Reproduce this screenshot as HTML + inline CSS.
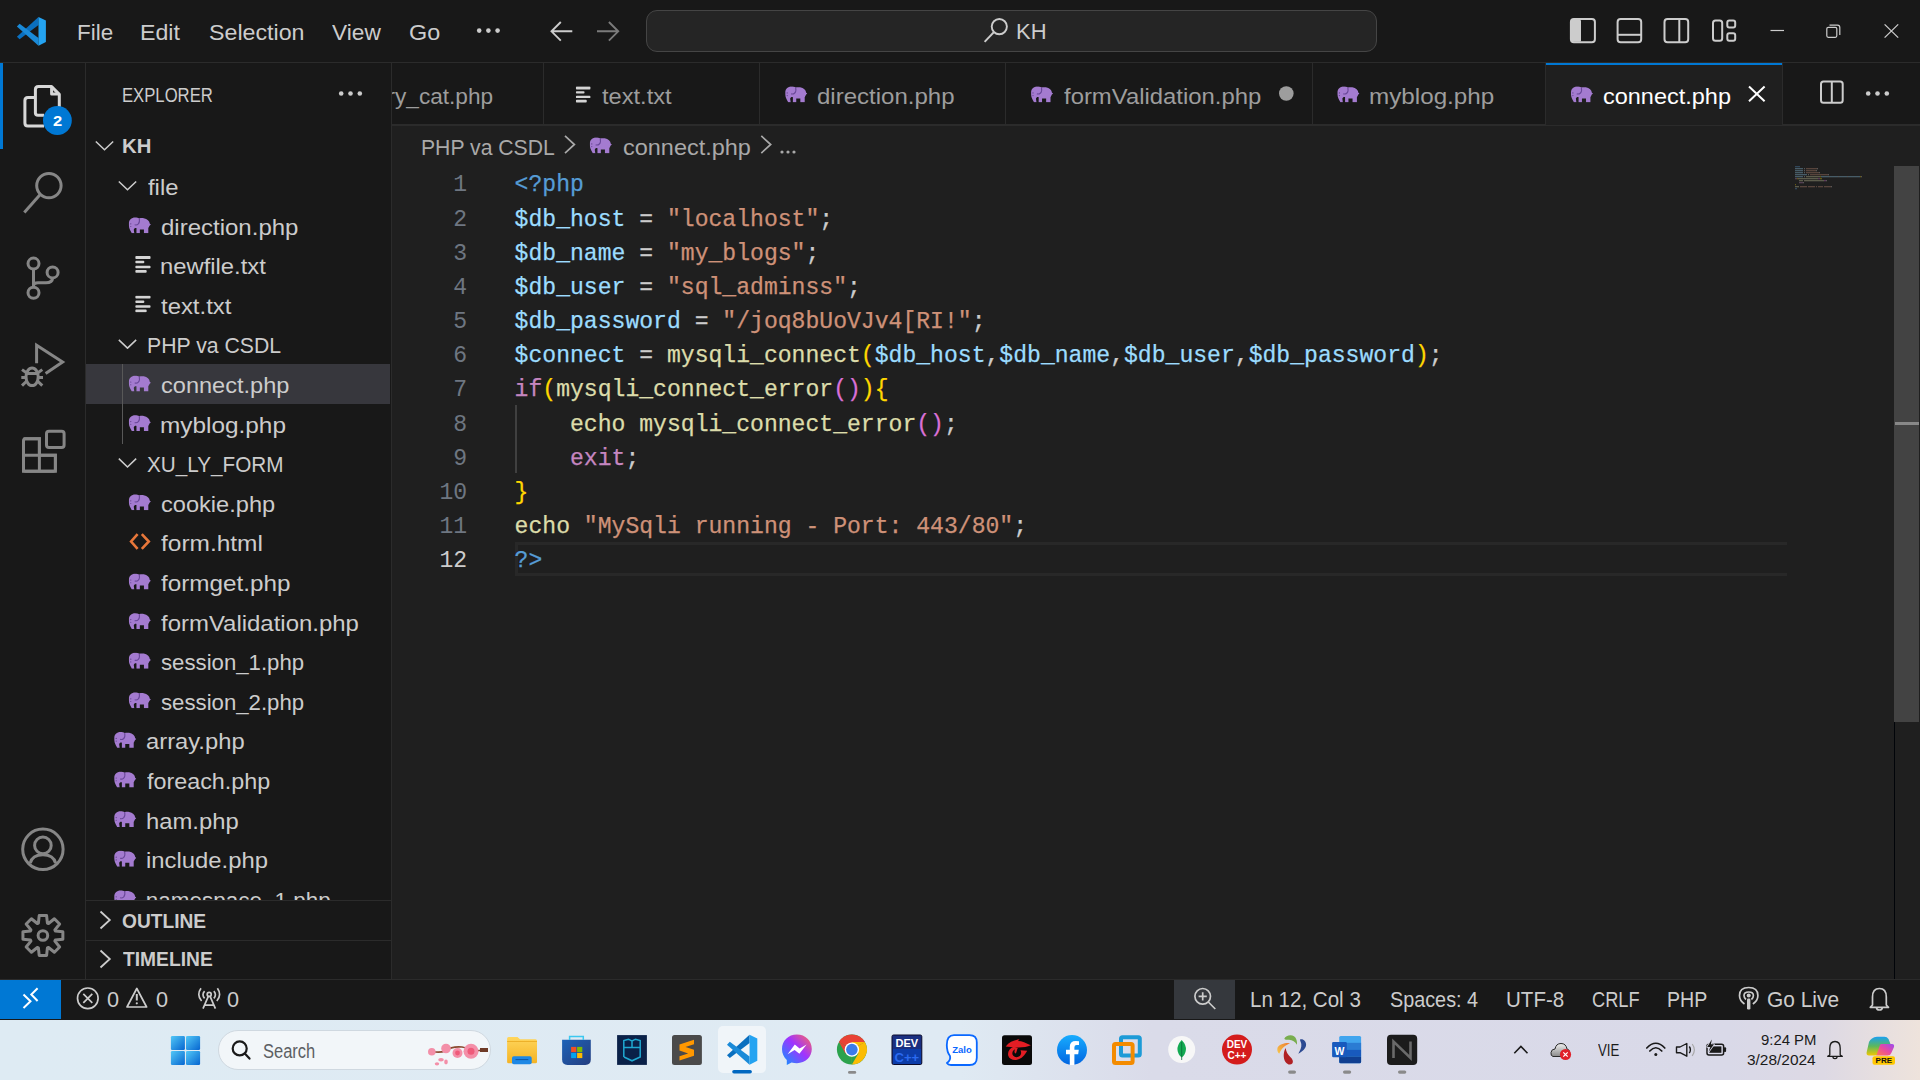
<!DOCTYPE html>
<html><head><meta charset="utf-8"><style>
html,body{margin:0;padding:0;width:1920px;height:1080px;overflow:hidden;background:#1f1f1f;}
body{position:relative;font-family:"Liberation Sans",sans-serif;}
.b{position:absolute;}
.t{position:absolute;white-space:pre;line-height:1;transform-origin:0 0;font-family:"Liberation Sans",sans-serif;}
#ic{position:absolute;left:0;top:0;}
#sbclip{position:absolute;left:0;top:0;width:1920px;height:1080px;clip-path:inset(0 0 180px 0);}

.c{position:absolute;left:514.6px;-webkit-text-stroke:0.25px currentColor;font-family:"Liberation Mono",monospace;font-size:23.088px;line-height:23.088px;white-space:pre;}
.ln{position:absolute;left:400px;width:67.19999999999999px;text-align:right;font-family:"Liberation Mono",monospace;font-size:23.088px;line-height:23.088px;white-space:pre;}
</style></head><body>
<!-- title bar -->
<div class="b" style="left:0;top:0;width:1920px;height:62px;background:#181818"></div>
<div class="b" style="left:0;top:62px;width:1920px;height:1px;background:#2b2b2b"></div>
<!-- command center -->
<div class="b" style="left:646px;top:10px;width:729px;height:40px;background:#252525;border:1px solid #454545;border-radius:11px"></div>
<!-- activity bar -->
<div class="b" style="left:0;top:63px;width:85px;height:917px;background:#181818"></div>
<div class="b" style="left:85px;top:63px;width:1px;height:917px;background:#2b2b2b"></div>
<div class="b" style="left:0;top:63px;width:3px;height:86px;background:#0078d4"></div>
<!-- sidebar -->
<div class="b" style="left:86px;top:63px;width:305px;height:917px;background:#181818"></div>
<div class="b" style="left:391px;top:63px;width:1px;height:917px;background:#2b2b2b"></div>
<div class="b" style="left:86px;top:364px;width:304px;height:40px;background:#37373d"></div>
<div class="b" style="left:122px;top:364px;width:1px;height:80px;background:#585858"></div>
<div class="b" style="left:86px;top:900px;width:305px;height:1px;background:#2b2b2b"></div>
<div class="b" style="left:86px;top:940px;width:305px;height:1px;background:#2b2b2b"></div>
<!-- tabs -->
<div class="b" style="left:392px;top:63px;width:1528px;height:61px;background:#181818"></div>
<div class="b" style="left:392px;top:124px;width:1528px;height:2px;background:#2b2b2b"></div>
<div class="b" style="left:543px;top:63px;width:1px;height:61px;background:#2b2b2b"></div>
<div class="b" style="left:759px;top:63px;width:1px;height:61px;background:#2b2b2b"></div>
<div class="b" style="left:1005px;top:63px;width:1px;height:61px;background:#2b2b2b"></div>
<div class="b" style="left:1312px;top:63px;width:1px;height:61px;background:#2b2b2b"></div>
<div class="b" style="left:1545px;top:63px;width:1px;height:61px;background:#2b2b2b"></div>
<div class="b" style="left:1782px;top:63px;width:1px;height:61px;background:#2b2b2b"></div>
<div class="b" style="left:1546px;top:63px;width:236px;height:62px;background:#1f1f1f"></div>
<div class="b" style="left:1546px;top:63px;width:236px;height:2px;background:#0078d4"></div>
<!-- editor -->
<div class="b" style="left:392px;top:126px;width:1528px;height:854px;background:#1f1f1f"></div>
<!-- current line border -->
<div class="b" style="left:515px;top:542px;width:1269px;height:28px;border:3px solid #282828;border-right:none"></div>
<!-- indent guide -->
<div class="b" style="left:515px;top:405px;width:2px;height:68px;background:#404040"></div>
<!-- scrollbar -->
<div class="b" style="left:1894px;top:722px;width:1px;height:257px;background:#010409"></div>
<div class="b" style="left:1894px;top:166px;width:25px;height:556px;background:#434343"></div>
<div class="b" style="left:1895px;top:422px;width:24px;height:3px;background:#888888"></div>
<!-- status bar -->
<div class="b" style="left:0;top:979px;width:1920px;height:1px;background:#2b2b2b"></div>
<div class="b" style="left:0;top:980px;width:1920px;height:40px;background:#181818"></div>
<div class="b" style="left:0;top:980px;width:61px;height:39px;background:#0078d4"></div>
<div class="b" style="left:1174px;top:980px;width:61px;height:39px;background:#35383d"></div>
<!-- taskbar -->
<div class="b" style="left:0;top:1020px;width:1920px;height:60px;background:linear-gradient(90deg,#deebf3 0%,#dfeaf3 50%,#dadbe9 60%,#d9d9e8 90%,#ddd9e4 95%,#eee3dc 100%)"></div>
<div class="b" style="left:218px;top:1030px;width:271px;height:38px;background:#f2f6f9;border:1px solid #cfd8e0;border-radius:20px"></div>
<div class="b" style="left:718px;top:1026px;width:48px;height:47px;background:#f0f5f9;border-radius:5px"></div>

<svg id="ic" width="1920" height="1080" viewBox="0 0 1920 1080">
<defs>
<symbol id="ele" viewBox="0 0 22.7 16.2">
<path fill="#a47bd0" d="M0.5 6.5C0.5 2.6 3 0.3 6.8 0.3C8.5 0.3 9.8 0.7 10.9 1.3C12 0.9 13.8 0.8 15.4 1C19 1.4 21.2 3.8 21.5 6.6L22.6 7.4L21.4 8.4L20 11L20 16.2L15.6 16.2L15.6 12.3L11.5 12.3L11.5 16.2L8.1 16.2L8.1 11C7 10.6 5.7 11 5.4 12.6L5.9 16.2L3.4 16.2C2.7 14.6 1.4 12.6 0.8 10.6C0.5 9.3 0.5 7.8 0.5 6.5Z"/>
<path fill="none" stroke="#6a4899" stroke-width="1.1" d="M10.9 1.3C11.3 3.2 11.2 5.6 10 6.8C8.9 7.9 7.6 8 6.3 7.7"/>
<circle cx="2.4" cy="6.7" r="0.6" fill="#5d3f86"/><circle cx="2.4" cy="9.4" r="0.55" fill="#5d3f86"/>
</symbol>
<symbol id="txt" viewBox="0 0 16 17">
<g fill="#d4d4d4"><rect x="0" y="0" width="15.7" height="3" rx="1"/><rect x="0" y="4.9" width="9.3" height="2.5" rx="1"/><rect x="0" y="9.8" width="15.7" height="2.5" rx="1"/><rect x="0" y="14.1" width="11.7" height="2.8" rx="1"/></g>
</symbol>
<symbol id="chev" viewBox="0 0 20 11">
<path d="M1 1.2L10 9.8L19 1.2" fill="none" stroke="#cccccc" stroke-width="1.6"/>
</symbol>
<clipPath id="sbc"><rect x="86" y="125" width="305" height="775"/></clipPath>
</defs>

<!-- ===== TITLE BAR ===== -->
<g>
 <path d="M16.9 36.7L38.5 17V25L19.6 39.3Z" fill="#0a6fbf"/>
 <path d="M16.9 26.5L19.6 23.8L38.5 37.9V45.7Z" fill="#1a8ad8"/>
 <path d="M38.5 17L45.9 20.6V42L38.5 45.7Z" fill="#24a3f1"/>
</g>
<g fill="#cccccc"><circle cx="479.2" cy="30.6" r="2.3"/><circle cx="488.4" cy="30.6" r="2.3"/><circle cx="497.6" cy="30.6" r="2.3"/></g>
<path d="M551.5 31.3H572.3M560.8 22L551.5 31.3L560.8 40.6" fill="none" stroke="#cccccc" stroke-width="1.9"/>
<path d="M597 31.3H618.2M608.9 22L618.2 31.3L608.9 40.6" fill="none" stroke="#7b7b7b" stroke-width="1.9"/>
<g fill="none" stroke="#cccccc" stroke-width="1.9"><circle cx="999.3" cy="26.6" r="7.6"/><path d="M994 32L984.6 41.8"/></g>
<!-- layout icons -->
<g fill="none" stroke="#cccccc" stroke-width="2">
 <rect x="1570.9" y="18.9" width="24" height="23.3" rx="3"/>
 <rect x="1617.6" y="18.9" width="23.6" height="23.3" rx="3"/><path d="M1617.6 34.8H1641.2"/>
 <rect x="1664.5" y="18.9" width="23.7" height="23.3" rx="3"/><path d="M1679.3 18.9V42.2"/>
 <rect x="1713" y="20.4" width="9.2" height="20.3" rx="2.5"/>
 <rect x="1727.3" y="20.4" width="7.9" height="7.2" rx="2"/><rect x="1727.3" y="33.3" width="7.9" height="7.4" rx="2"/>
</g>
<rect x="1571" y="19.5" width="10" height="22.3" rx="1.5" fill="#cccccc"/>
<path d="M1770.5 30.5H1784" stroke="#cccccc" stroke-width="1.2"/>
<g fill="none" stroke="#cccccc" stroke-width="1.2"><rect x="1826.8" y="27.3" width="10" height="10" rx="1.5"/><path d="M1829.5 25.2H1837.5Q1839.8 25.2 1839.8 27.5V35"/></g>
<path d="M1884.6 24.4L1898.2 37.6M1898.2 24.4L1884.6 37.6" stroke="#cccccc" stroke-width="1.3"/>

<!-- ===== ACTIVITY BAR ===== -->
<g fill="none" stroke="#d7d7d7" stroke-width="3" stroke-linejoin="round">
 <path d="M35.4 113V89.6Q35.4 86.6 38.4 86.6H51.6L59.3 94.4V108"/>
 <path d="M51.6 86.6V94.1H59.3"/>
 <path d="M35.4 113Q35.4 115.2 38 115.2H44"/>
 <path d="M35.4 97.4H27.9Q24.9 97.4 24.9 100.4V123Q24.9 126 27.9 126H44"/>
</g>
<circle cx="57.4" cy="120.5" r="14.4" fill="#0078d4"/>
<g fill="none" stroke="#868686" stroke-width="3">
 <circle cx="48.9" cy="185.6" r="12.2"/><path d="M40.2 194.5L24.3 212.6"/>
 <circle cx="33.5" cy="263.6" r="5.5"/><circle cx="52.6" cy="272.4" r="5.5"/><circle cx="33.5" cy="292.8" r="5.5"/>
 <path d="M33.5 269.1V287.3M52.6 277.9Q52.4 282.8 46 282.8H38Q33.5 282.8 33.5 286"/>
 <path d="M36.6 363.3V345.3L62.6 362L45.6 373.6"/>
 <ellipse cx="32.1" cy="376.8" rx="6.1" ry="8.8"/><path d="M26 373.6H38.2M22 369.6L26.8 373M42.3 369.6L37.5 373M21.3 377.6H26M38.2 377.6H43M22 385.6L26.8 381M42.3 385.6L37.5 381"/>
 <path d="M23.5 455.3H55.4V471.3H23.5ZM23.5 438.8H39.4V471.3"/>
 <rect x="46.5" y="431.2" width="17.6" height="16.4" rx="2.5"/>
 <path d="M23.5 440.8Q23.5 438.8 25.5 438.8H39.4V455.3H55.4V469.3Q55.4 471.3 53.4 471.3H25.5Q23.5 471.3 23.5 469.3Z"/>
</g>
<g fill="none" stroke="#868686" stroke-width="3">
 <circle cx="42.9" cy="849.3" r="20.2"/><circle cx="42.9" cy="845.4" r="8.3"/>
 <path d="M30.2 863.2C31.6 857.6 36.2 854.8 42.9 854.8C49.6 854.8 54.2 857.6 55.6 863.2"/>
</g>
<path fill="none" stroke="#868686" stroke-width="3" stroke-linejoin="round" d="M38.39 923.10 L39.20 915.54 L46.60 915.54 L47.41 923.10 L48.48 923.54 L54.40 918.77 L59.63 924.00 L54.86 929.92 L55.30 930.99 L62.86 931.80 L62.86 939.20 L55.30 940.01 L54.86 941.08 L59.63 947.00 L54.40 952.23 L48.48 947.46 L47.41 947.90 L46.60 955.46 L39.20 955.46 L38.39 947.90 L37.32 947.46 L31.40 952.23 L26.17 947.00 L30.94 941.08 L30.50 940.01 L22.94 939.20 L22.94 931.80 L30.50 930.99 L30.94 929.92 L26.17 924.00 L31.40 918.77 L37.32 923.54Z"/>
<circle cx="42.9" cy="935.5" r="4.8" fill="none" stroke="#868686" stroke-width="3"/>

<!-- ===== TABS ===== -->
<use href="#ele" x="784.8" y="86.2" width="22.6" height="16.2"/>
<use href="#ele" x="1030.6" y="86.2" width="22.6" height="16.2"/>
<use href="#ele" x="1337" y="86.2" width="22.6" height="16.2"/>
<use href="#ele" x="1570.5" y="86.2" width="22.6" height="16.2"/>
<use href="#txt" x="575.8" y="86.2" width="15" height="16.7"/>
<circle cx="1286.3" cy="93.5" r="7.3" fill="#9d9d9d"/>
<path d="M1749 86.6L1764.6 101.3M1764.6 86.6L1749 101.3" stroke="#ffffff" stroke-width="2"/>
<g fill="none" stroke="#cccccc" stroke-width="2"><rect x="1821" y="81.6" width="21.7" height="21.2" rx="2.5"/><path d="M1831.8 81.6V102.8"/></g>
<g fill="#cccccc"><circle cx="1868.2" cy="93.5" r="2.3"/><circle cx="1877.5" cy="93.5" r="2.3"/><circle cx="1886.8" cy="93.5" r="2.3"/></g>

<!-- ===== BREADCRUMBS ===== -->
<path d="M565 135.9L574.4 144.5L565 153.1M761.3 135.9L770.7 144.5L761.3 153.1" fill="none" stroke="#a9a9a9" stroke-width="1.7"/>
<use href="#ele" x="589.4" y="137.2" width="22.6" height="16.2"/>
<g fill="#a9a9a9"><circle cx="782" cy="152" r="1.6"/><circle cx="788" cy="152" r="1.6"/><circle cx="794" cy="152" r="1.6"/></g>

<!-- ===== SIDEBAR ===== -->
<g fill="#cccccc"><circle cx="341.2" cy="93.5" r="2.3"/><circle cx="350.5" cy="93.5" r="2.3"/><circle cx="359.8" cy="93.5" r="2.3"/></g>
<use href="#chev" x="94.8" y="140.3" width="19.4" height="10.6"/>
<use href="#chev" x="117.8" y="180.3" width="19.4" height="10.6"/>
<use href="#chev" x="117.8" y="338.7" width="19.4" height="10.6"/>
<use href="#chev" x="117.8" y="457.5" width="19.4" height="10.6"/>
<use href="#ele" x="128.4" y="217.1" width="22.6" height="16.2"/>
<use href="#txt" x="135.2" y="255.9" width="15.7" height="17"/>
<use href="#txt" x="135.2" y="295.5" width="15.7" height="17"/>
<use href="#ele" x="128.4" y="375.3" width="22.6" height="16.2"/>
<use href="#ele" x="128.4" y="414.9" width="22.6" height="16.2"/>
<use href="#ele" x="128.4" y="494.1" width="22.6" height="16.2"/>
<path d="M137.6 534.1L131.1 541.5L137.6 548.9M141.8 534.1L148.8 541.5L141.8 548.9" fill="none" stroke="#e8773a" stroke-width="2.6"/>
<use href="#ele" x="128.4" y="573.3" width="22.6" height="16.2"/>
<use href="#ele" x="128.4" y="612.9" width="22.6" height="16.2"/>
<use href="#ele" x="128.4" y="652.5" width="22.6" height="16.2"/>
<use href="#ele" x="128.4" y="692.1" width="22.6" height="16.2"/>
<use href="#ele" x="113.8" y="731.7" width="22.6" height="16.2"/>
<use href="#ele" x="113.8" y="771.3" width="22.6" height="16.2"/>
<use href="#ele" x="113.8" y="810.9" width="22.6" height="16.2"/>
<use href="#ele" x="113.8" y="850.5" width="22.6" height="16.2"/>
<g clip-path="url(#sbc)"><use href="#ele" x="113.8" y="890.1" width="22.6" height="16.2"/></g>
<path d="M100.5 911.5L109.8 920L100.5 928.5M100.5 950.5L109.8 959L100.5 967.5" fill="none" stroke="#cccccc" stroke-width="1.8"/>

<!-- ===== STATUS BAR ===== -->
<path d="M23.5 994.5L30.5 1001.3L23.5 1008M37.6 988.3L31.3 994.5L37.6 1001" fill="none" stroke="#ffffff" stroke-width="2"/>
<g fill="none" stroke="#cccccc" stroke-width="1.7">
 <circle cx="87.8" cy="998.3" r="10.3"/><path d="M83.3 993.8L92.3 1002.8M92.3 993.8L83.3 1002.8"/>
 <path d="M136.8 988.5L127 1007H146.6Z" stroke-linejoin="round"/>
 <path d="M201 988.3Q198.8 991.3 198.8 994.6Q198.8 998 201.6 1001M217.4 988.3Q219.6 991.3 219.6 994.6Q219.6 998 216.8 1001M204.6 991.2Q203 992.8 203 994.8Q203 996.8 204.6 998.4M213.8 991.2Q215.4 992.8 215.4 994.8Q215.4 996.8 213.8 998.4"/>
 <circle cx="209.2" cy="994.4" r="2"/><path d="M208.3 996.4L203 1008.6M210.1 996.4L215.4 1008.6M204.6 1005.2H213.8"/>
</g>
<path d="M136.8 994V1000.5" stroke="#cccccc" stroke-width="2"/><circle cx="136.8" cy="1003.3" r="1.1" fill="#cccccc"/>
<g fill="none" stroke="#cccccc" stroke-width="1.7">
 <circle cx="1202.7" cy="996.3" r="7.8"/><path d="M1208.3 1002L1215.3 1009M1202.7 992.2V1000.4M1198.6 996.3H1206.8"/>
 <path d="M1744.5 1004Q1739.5 1000.5 1739.5 995.5Q1739.5 987.5 1748.7 987.5Q1757.9 987.5 1757.9 995.5Q1757.9 1000.5 1752.9 1004M1746 999.5Q1744 997.8 1744 995.5Q1744 992 1748.7 992Q1753.4 992 1753.4 995.5Q1753.4 997.8 1751.4 999.5"/>
</g>
<circle cx="1748.7" cy="995.5" r="2" fill="#cccccc"/><rect x="1747" y="998.5" width="3.4" height="11" rx="1.2" fill="#cccccc"/>
<path d="M1872.5 1005V997Q1872.5 988.5 1879.4 988.5Q1886.3 988.5 1886.3 997V1005L1888.5 1007.3H1870.3Z M1876.5 1007.5Q1876.5 1010 1879.4 1010Q1882.3 1010 1882.3 1007.5" fill="none" stroke="#cccccc" stroke-width="1.7" stroke-linejoin="round"/>
<defs>
<linearGradient id="wing" x1="0" y1="0" x2="1" y2="1"><stop offset="0" stop-color="#52c8f7"/><stop offset="1" stop-color="#0665d0"/></linearGradient>
<linearGradient id="fold" x1="0" y1="0" x2="0" y2="1"><stop offset="0" stop-color="#ffd65c"/><stop offset="1" stop-color="#f4b324"/></linearGradient>
<linearGradient id="store" x1="0" y1="0" x2="1" y2="1"><stop offset="0" stop-color="#1e63b8"/><stop offset="1" stop-color="#243e80"/></linearGradient>
<linearGradient id="msg" x1="0" y1="1" x2="1" y2="0"><stop offset="0" stop-color="#0998ff"/><stop offset="0.55" stop-color="#a033ff"/><stop offset="1" stop-color="#ff6b5c"/></linearGradient>
<linearGradient id="fb" x1="0" y1="0" x2="0" y2="1"><stop offset="0" stop-color="#18acfe"/><stop offset="1" stop-color="#0165e1"/></linearGradient>
<linearGradient id="cop1" x1="0" y1="0" x2="0" y2="1"><stop offset="0" stop-color="#1aa0f0"/><stop offset="0.5" stop-color="#5cb85c"/><stop offset="1" stop-color="#f0c800"/></linearGradient>
<linearGradient id="cop2" x1="0" y1="1" x2="1" y2="0"><stop offset="0" stop-color="#ff7a50"/><stop offset="0.5" stop-color="#e84aa0"/><stop offset="1" stop-color="#9a4cf0"/></linearGradient>
<linearGradient id="cloud" x1="0" y1="0" x2="0" y2="1"><stop offset="0" stop-color="#f0f0f0"/><stop offset="1" stop-color="#8a8a8a"/></linearGradient>
</defs>
<!-- windows -->
<g fill="url(#wing)"><rect x="170.9" y="1035.9" width="14" height="14.1" rx="1.3"/><rect x="186" y="1035.9" width="14.1" height="14.1" rx="1.3"/><rect x="170.9" y="1051" width="14" height="14.1" rx="1.3"/><rect x="186" y="1051" width="14.1" height="14.1" rx="1.3"/></g>
<!-- search -->
<g fill="none" stroke="#1a1a1a" stroke-width="2.2"><circle cx="239.7" cy="1048.4" r="7"/><path d="M244.8 1053.6L249.5 1058.6" stroke-linecap="round"/></g>
<!-- cherry blossom -->
<path d="M432 1051.5Q440 1053 445 1051Q452 1046 462 1047Q468 1048 471 1051L488 1050" fill="none" stroke="#8a4a30" stroke-width="1.6"/>
<rect x="480" y="1048" width="8" height="4" fill="#6e3a26"/>
<g fill="#f38fa8"><circle cx="471" cy="1051.2" r="7.5"/><circle cx="457.5" cy="1053" r="5"/><circle cx="446" cy="1048.5" r="4.8"/><circle cx="431.8" cy="1051.8" r="3.8"/><ellipse cx="437" cy="1063.8" rx="2.2" ry="1.6"/><ellipse cx="441" cy="1059.8" rx="2.8" ry="1.8"/><ellipse cx="446" cy="1062" rx="1.8" ry="2.4"/></g>
<g fill="#ef5a7a"><circle cx="471" cy="1051.2" r="3.5"/><circle cx="457.5" cy="1053" r="2.4"/></g>
<!-- file explorer -->
<path d="M507.1 1038.5Q507.1 1037 508.6 1037H517.5L520 1039.2H535.5Q537 1039.2 537 1040.7V1062Q537 1063.3 535.5 1063.3H508.6Q507.1 1063.3 507.1 1062Z" fill="url(#fold)"/>
<path d="M507.1 1041.5H537" stroke="#e8a820" stroke-width="0.8"/>
<rect x="512" y="1056.2" width="19.7" height="8" rx="1.8" fill="#1e88e5"/><path d="M515.5 1059.6H528.3" stroke="#0d4f9a" stroke-width="0.9"/>
<!-- store -->
<path d="M562.1 1039.8H590.8V1059.5Q590.8 1064.9 585.4 1064.9H567.5Q562.1 1064.9 562.1 1059.5Z" fill="url(#store)"/>
<path d="M569.6 1040V1036.6H583.3V1040" fill="none" stroke="#3cc8f0" stroke-width="1.5"/>
<rect x="571.1" y="1046.9" width="5.2" height="5.2" fill="#f25022"/><rect x="577.1" y="1046.9" width="5.2" height="5.2" fill="#7fba00"/><rect x="571.1" y="1052.9" width="5.2" height="5.2" fill="#00a4ef"/><rect x="577.1" y="1052.9" width="5.2" height="5.2" fill="#ffb900"/>
<!-- packet tracer-like -->
<rect x="617.1" y="1035.1" width="29.8" height="29.8" fill="#0a2148"/>
<path d="M623.8 1057V1040.5L628.5 1039.2L632 1041V1047.5H624M632 1041L635.5 1039.2L640.2 1040.5V1057L632 1060.8L624 1057M632 1047.5H640" fill="none" stroke="#1fa8d0" stroke-width="1.5"/>
<!-- sublime -->
<rect x="672" y="1035.1" width="29.9" height="29.8" rx="2.5" fill="#4a4a4a"/>
<path d="M694 1039.8L679.5 1044.5V1050.5L694 1055.5V1050.8L683.8 1047.5L694 1044.2Z M679.5 1060.5L694 1055.8V1049.8L679.5 1045V1049.6L689.7 1052.9L679.5 1056.2Z" fill="#ff9800"/>
<!-- vscode taskbar -->
<g transform="translate(727 1034.7) scale(1.045) translate(-16.9 -17)">
 <path d="M16.9 36.7L38.5 17V25L19.6 39.3Z" fill="#0a6fbf"/>
 <path d="M16.9 26.5L19.6 23.8L38.5 37.9V45.7Z" fill="#1a8ad8"/>
 <path d="M38.5 17L45.9 20.6V42L38.5 45.7Z" fill="#24a3f1"/>
</g>
<rect x="732.2" y="1070" width="19.7" height="3.6" rx="1.8" fill="#0067c0"/>
<!-- messenger -->
<path d="M796.9 1034.5C788.3 1034.5 782 1040.8 782 1049.1C782 1053.5 783.8 1057.3 786.8 1059.9V1065L791.6 1062.4C793.2 1062.9 795 1063.2 796.9 1063.2C805.5 1063.2 811.8 1056.9 811.8 1049.1C811.8 1040.8 805.5 1034.5 796.9 1034.5Z" fill="url(#msg)"/>
<path d="M787.6 1054.2L794.8 1044.6L799.6 1048.6L806.6 1044.4L799.4 1053.8L794.6 1049.9Z" fill="#ffffff"/>
<!-- chrome -->
<circle cx="851.9" cy="1049.6" r="15" fill="#2ba24c"/>
<path d="M851.9 1049.6L838.9 1042.1A15 15 0 0 1 864.9 1042.1Z" fill="#e94235"/>
<path d="M851.9 1049.6L864.9 1042.1A15 15 0 0 1 851.9 1064.6Z" fill="#fbbc04"/>
<path d="M838.9 1042.1L845.4 1053.4L851.9 1049.6Z" fill="#e94235"/>
<path d="M864.9 1042.1L851.9 1042.1L851.9 1049.6Z" fill="#fbbc04"/>
<path d="M851.9 1064.6L858.4 1053.4L851.9 1049.6Z" fill="#2ba24c"/>
<circle cx="851.9" cy="1049.6" r="7.2" fill="#ffffff"/><circle cx="851.9" cy="1049.6" r="5.8" fill="#3b7bea"/>
<rect x="848" y="1071" width="8.2" height="2.8" rx="1.4" fill="#8a8a8a"/>
<!-- dev c++ blue -->
<rect x="892" y="1035" width="29.8" height="29.5" rx="1.5" fill="#1a2f80" stroke="#0b0b2a" stroke-width="1"/>
<rect x="893" y="1049" width="28" height="15" fill="#0c3ca8"/>
<text x="906.9" y="1047" font-family="Liberation Sans" font-weight="700" font-size="11" fill="#ffffff" text-anchor="middle">DEV</text>
<text x="906.9" y="1062" font-family="Liberation Sans" font-weight="700" font-size="13" fill="#2b6af0" text-anchor="middle">C++</text>
<!-- zalo -->
<path d="M954 1035.2H969.5Q976.8 1035.2 976.8 1042.5V1057.7Q976.8 1065 969.5 1065H951Q948 1065 947 1063Q951 1060 950 1056Q946.8 1052 946.8 1045Q946.8 1035.2 954 1035.2Z" fill="#ffffff" stroke="#0a68ff" stroke-width="1.8"/>
<text x="962" y="1053" font-family="Liberation Sans" font-weight="700" font-size="9.5" fill="#0a68ff" text-anchor="middle">Zalo</text>
<!-- garena -->
<rect x="1002" y="1035.2" width="30" height="29.8" rx="2.5" fill="#0a0a0a"/>
<path d="M1005.7 1046.5C1009 1042 1014 1040 1019.5 1039.2L1018 1041C1022 1041 1026 1043 1030.8 1045.3C1027 1047 1022 1047.8 1016 1047.5C1012 1047.3 1008.5 1046.5 1005.7 1046.5Z" fill="#e31d24"/>
<path d="M1013.5 1046.8C1009.5 1048.5 1007.5 1052 1008.2 1055.5C1009 1059 1013 1060.5 1017 1059.8C1021.5 1059 1025 1055 1027.2 1050.8L1020.5 1050.3C1021.5 1052 1021.3 1054.5 1019.8 1056C1017.8 1057.8 1013.8 1057.5 1012.6 1054.8C1011.8 1052.5 1013 1050 1015.2 1049.2C1014 1051 1014.2 1053 1015.8 1053.6C1016.8 1051.8 1016.8 1049.5 1017.8 1048.2C1016.6 1047.4 1015 1047 1013.5 1046.8Z" fill="#e31d24"/>
<!-- facebook -->
<circle cx="1072" cy="1050" r="15" fill="url(#fb)"/>
<path d="M1074.4 1065V1054.2H1078.2L1078.8 1049.8H1074.4V1047.2Q1074.4 1045 1076.6 1045H1079V1041.2Q1077.6 1041 1075.8 1041Q1069.8 1041 1069.8 1046.8V1049.8H1066V1054.2H1069.8V1065Z" fill="#ffffff"/>
<!-- vmware -->
<rect x="1121" y="1037.2" width="18.8" height="18.3" rx="1.5" fill="none" stroke="#1d9bd7" stroke-width="4"/>
<rect x="1114" y="1043.9" width="18.6" height="19.1" rx="1.5" fill="none" stroke="#f38b00" stroke-width="4"/>
<!-- mongo -->
<circle cx="1181.7" cy="1049.5" r="13.5" fill="#f7f7f7"/>
<path d="M1181.7 1040Q1177 1045 1177.5 1050Q1178 1054.5 1181.7 1057.5Q1185.4 1054.5 1185.9 1050Q1186.4 1045 1181.7 1040Z" fill="#13aa52"/><path d="M1181.7 1042V1060" stroke="#0a6a3a" stroke-width="0.8"/>
<!-- dev c++ red -->
<circle cx="1237" cy="1049.6" r="15" fill="#d41c1c"/>
<text x="1237" y="1048" font-family="Liberation Sans" font-weight="700" font-size="10" fill="#ffffff" text-anchor="middle">DEV</text>
<text x="1237" y="1058.5" font-family="Liberation Sans" font-weight="700" font-size="10" fill="#ffffff" text-anchor="middle">C++</text>
<!-- pinwheel -->
<linearGradient id="orng" x1="1" y1="0" x2="0" y2="1"><stop offset="0" stop-color="#ee7a30"/><stop offset="1" stop-color="#f7c94a"/></linearGradient>
<path d="M1284.3 1038.8C1285.5 1035.5 1291 1034.2 1294 1036.3C1296.5 1038 1297.3 1041.5 1297 1044.7C1295.3 1042 1292.5 1040 1289 1039.8C1287 1039.7 1285 1040 1284.3 1038.8Z" fill="#78ad4e"/>
<path d="M1300.2 1039.3C1303.5 1038.5 1306.2 1041.5 1306.1 1044.8C1306 1048.5 1302 1052 1298.3 1053.7C1300 1050.5 1301.8 1047.5 1301.3 1044C1301 1042 1299.6 1040.4 1300.2 1039.3Z" fill="#2c4a92"/>
<path d="M1290 1043C1285 1042.5 1279.5 1044 1277.6 1047.5C1276.8 1049.5 1277.5 1052.5 1279.2 1053.7C1280.5 1050.5 1282.5 1047.8 1285 1046C1286.8 1044.8 1288.5 1044 1290 1043Z" fill="url(#orng)"/>
<path d="M1285.7 1048C1283.3 1052 1283 1058 1285.5 1062C1287 1064.5 1290.5 1065.5 1292.3 1063.5C1293.8 1061.5 1292.5 1059 1290.3 1057C1287.8 1054.5 1286 1051.5 1285.7 1048Z" fill="#b02024"/>
<rect x="1288.1" y="1070.4" width="7.9" height="3.3" rx="1.6" fill="#8a8a8a"/>
<!-- word -->
<rect x="1339.2" y="1036" width="21.9" height="27.3" rx="1.5" fill="#41a5ee"/>
<rect x="1339.2" y="1042.8" width="21.9" height="6.8" fill="#2b7cd3"/><rect x="1339.2" y="1049.6" width="21.9" height="6.8" fill="#185abd"/><path d="M1339.2 1056.4H1361.1V1061.8Q1361.1 1063.3 1359.6 1063.3H1340.7Q1339.2 1063.3 1339.2 1061.8Z" fill="#103f91"/>
<rect x="1332.1" y="1042" width="14.7" height="15.3" rx="1.2" fill="#185abd"/>
<text x="1339.5" y="1054.5" font-family="Liberation Sans" font-weight="700" font-size="10.5" fill="#ffffff" text-anchor="middle">W</text>
<rect x="1343" y="1070.4" width="8.2" height="3.3" rx="1.6" fill="#8a8a8a"/>
<!-- N -->
<rect x="1387" y="1034.8" width="30.2" height="30.2" rx="4" fill="#1c1c1c"/>
<path d="M1393.5 1058V1041.5L1410.5 1058V1041.5" fill="none" stroke="#6a6a6a" stroke-width="2.6"/>
<rect x="1398" y="1070.4" width="8.3" height="3.3" rx="1.6" fill="#8a8a8a"/>
<!-- tray -->
<path d="M1514.3 1053.2L1520.9 1046.5L1527.5 1053.2" fill="none" stroke="#1a1a1a" stroke-width="1.6"/>
<path d="M1553 1056.5Q1550.5 1056 1551 1052.5Q1551.5 1049 1555 1049Q1556 1043.5 1561 1043.5Q1566 1043.5 1567 1049Q1570 1049.5 1569.5 1053Q1569 1056.5 1566 1056.5Z" fill="url(#cloud)" stroke="#2a2a2a" stroke-width="1"/>
<circle cx="1565.5" cy="1054.5" r="5.6" fill="#e0202a"/><path d="M1563.3 1052.3L1567.7 1056.7M1567.7 1052.3L1563.3 1056.7" stroke="#fff" stroke-width="1.2"/>
<g fill="none" stroke="#1a1a1a" stroke-width="1.7" stroke-linecap="round">
 <path d="M1646.8 1048Q1655.8 1038.5 1664.8 1048M1649.8 1051Q1655.8 1044.5 1661.8 1051"/>
</g>
<circle cx="1655.8" cy="1054.6" r="1.5" fill="#1a1a1a"/>
<path d="M1676.5 1047H1680L1686.8 1043.5V1056.2L1680 1052.7H1676.5Z" fill="none" stroke="#1a1a1a" stroke-width="1.4" stroke-linejoin="round"/>
<path d="M1689.3 1046.5Q1691.5 1049.8 1689.3 1053.2" fill="none" stroke="#1a1a1a" stroke-width="1.4"/>
<path d="M1692.2 1044Q1696.5 1049.8 1692.2 1055.8" fill="none" stroke="#a8a8a8" stroke-width="1.2"/>
<rect x="1707" y="1044.2" width="16.6" height="10.8" rx="2" fill="none" stroke="#1a1a1a" stroke-width="1.5"/>
<rect x="1723.8" y="1047.3" width="2.3" height="4.8" rx="1" fill="#1a1a1a"/>
<rect x="1709.3" y="1046.4" width="12.1" height="6.4" fill="#1a1a1a"/>
<path d="M1711.8 1039.4L1707.2 1047H1710.3L1708.6 1051.8L1714 1044.3H1710.9Z" fill="#1a1a1a" stroke="#d9d9e8" stroke-width="1.6" stroke-linejoin="round" paint-order="stroke"/>
<path d="M1829.8 1055V1048.3Q1829.8 1041.5 1835 1041.5Q1840.2 1041.5 1840.2 1048.3V1055L1842.3 1056.3H1827.7Z M1833 1057Q1833 1058.6 1835 1058.6Q1837 1058.6 1837 1057" fill="none" stroke="#1a1a1a" stroke-width="1.3" stroke-linejoin="round"/>
<path d="M1872 1038.5Q1874 1036.8 1877 1036.8H1884.5Q1887 1036.8 1888.5 1039L1890.5 1044H1882L1879.5 1052Q1878.5 1055.5 1875 1055.5H1869Q1866.2 1055.5 1866.6 1052.5L1869 1042Q1870 1039.5 1872 1038.5Z" fill="url(#cop1)"/>
<path d="M1881 1044H1892Q1894.6 1044 1894 1047L1891.3 1053Q1890.4 1055.5 1887.5 1055.5H1876.3L1879.3 1047Q1880 1044 1881 1044Z" fill="url(#cop2)"/>
<rect x="1872.5" y="1056.3" width="22.5" height="8.4" rx="2" fill="#ffc800"/>
<text x="1883.8" y="1063.4" font-family="Liberation Sans" font-weight="700" font-size="8" fill="#111" text-anchor="middle">PRE</text>
<rect x="1795.0" y="166.0" width="5" height="1.3" fill="#569cd6" fill-opacity="0.32"/><rect x="1795.0" y="168.0" width="8" height="1.3" fill="#9cdcfe" fill-opacity="0.32"/><rect x="1804.0" y="168.0" width="1" height="1.3" fill="#cccccc" fill-opacity="0.32"/><rect x="1806.0" y="168.0" width="11" height="1.3" fill="#ce9178" fill-opacity="0.32"/><rect x="1817.0" y="168.0" width="1" height="1.3" fill="#cccccc" fill-opacity="0.32"/><rect x="1795.0" y="170.0" width="8" height="1.3" fill="#9cdcfe" fill-opacity="0.32"/><rect x="1804.0" y="170.0" width="1" height="1.3" fill="#cccccc" fill-opacity="0.32"/><rect x="1806.0" y="170.0" width="10" height="1.3" fill="#ce9178" fill-opacity="0.32"/><rect x="1816.0" y="170.0" width="1" height="1.3" fill="#cccccc" fill-opacity="0.32"/><rect x="1795.0" y="172.0" width="8" height="1.3" fill="#9cdcfe" fill-opacity="0.32"/><rect x="1804.0" y="172.0" width="1" height="1.3" fill="#cccccc" fill-opacity="0.32"/><rect x="1806.0" y="172.0" width="13" height="1.3" fill="#ce9178" fill-opacity="0.32"/><rect x="1819.0" y="172.0" width="1" height="1.3" fill="#cccccc" fill-opacity="0.32"/><rect x="1795.0" y="174.0" width="12" height="1.3" fill="#9cdcfe" fill-opacity="0.32"/><rect x="1808.0" y="174.0" width="1" height="1.3" fill="#cccccc" fill-opacity="0.32"/><rect x="1810.0" y="174.0" width="18" height="1.3" fill="#ce9178" fill-opacity="0.32"/><rect x="1828.0" y="174.0" width="1" height="1.3" fill="#cccccc" fill-opacity="0.32"/><rect x="1795.0" y="176.0" width="8" height="1.3" fill="#9cdcfe" fill-opacity="0.32"/><rect x="1804.0" y="176.0" width="1" height="1.3" fill="#cccccc" fill-opacity="0.32"/><rect x="1806.0" y="176.0" width="14" height="1.3" fill="#dcdcaa" fill-opacity="0.32"/><rect x="1820.0" y="176.0" width="1" height="1.3" fill="#ffd700" fill-opacity="0.32"/><rect x="1821.0" y="176.0" width="8" height="1.3" fill="#9cdcfe" fill-opacity="0.32"/><rect x="1829.0" y="176.0" width="1" height="1.3" fill="#cccccc" fill-opacity="0.32"/><rect x="1830.0" y="176.0" width="8" height="1.3" fill="#9cdcfe" fill-opacity="0.32"/><rect x="1838.0" y="176.0" width="1" height="1.3" fill="#cccccc" fill-opacity="0.32"/><rect x="1839.0" y="176.0" width="8" height="1.3" fill="#9cdcfe" fill-opacity="0.32"/><rect x="1847.0" y="176.0" width="1" height="1.3" fill="#cccccc" fill-opacity="0.32"/><rect x="1848.0" y="176.0" width="12" height="1.3" fill="#9cdcfe" fill-opacity="0.32"/><rect x="1860.0" y="176.0" width="1" height="1.3" fill="#ffd700" fill-opacity="0.32"/><rect x="1861.0" y="176.0" width="1" height="1.3" fill="#cccccc" fill-opacity="0.32"/><rect x="1795.0" y="178.0" width="2" height="1.3" fill="#c586c0" fill-opacity="0.32"/><rect x="1797.0" y="178.0" width="1" height="1.3" fill="#ffd700" fill-opacity="0.32"/><rect x="1798.0" y="178.0" width="20" height="1.3" fill="#dcdcaa" fill-opacity="0.32"/><rect x="1818.0" y="178.0" width="2" height="1.3" fill="#da70d6" fill-opacity="0.32"/><rect x="1820.0" y="178.0" width="1" height="1.3" fill="#ffd700" fill-opacity="0.32"/><rect x="1821.0" y="178.0" width="1" height="1.3" fill="#ffd700" fill-opacity="0.32"/><rect x="1799.0" y="180.0" width="4" height="1.3" fill="#dcdcaa" fill-opacity="0.32"/><rect x="1804.0" y="180.0" width="20" height="1.3" fill="#dcdcaa" fill-opacity="0.32"/><rect x="1824.0" y="180.0" width="2" height="1.3" fill="#da70d6" fill-opacity="0.32"/><rect x="1826.0" y="180.0" width="1" height="1.3" fill="#cccccc" fill-opacity="0.32"/><rect x="1799.0" y="182.0" width="4" height="1.3" fill="#c586c0" fill-opacity="0.32"/><rect x="1803.0" y="182.0" width="1" height="1.3" fill="#cccccc" fill-opacity="0.32"/><rect x="1795.0" y="184.0" width="1" height="1.3" fill="#ffd700" fill-opacity="0.32"/><rect x="1795.0" y="186.0" width="4" height="1.3" fill="#dcdcaa" fill-opacity="0.32"/><rect x="1800.0" y="186.0" width="7" height="1.3" fill="#ce9178" fill-opacity="0.32"/><rect x="1808.0" y="186.0" width="7" height="1.3" fill="#ce9178" fill-opacity="0.32"/><rect x="1816.0" y="186.0" width="1" height="1.3" fill="#ce9178" fill-opacity="0.32"/><rect x="1818.0" y="186.0" width="5" height="1.3" fill="#ce9178" fill-opacity="0.32"/><rect x="1824.0" y="186.0" width="7" height="1.3" fill="#ce9178" fill-opacity="0.32"/><rect x="1831.0" y="186.0" width="1" height="1.3" fill="#cccccc" fill-opacity="0.32"/><rect x="1795.0" y="188.0" width="2" height="1.3" fill="#569cd6" fill-opacity="0.32"/>
</svg>
<div id="sbclip">
<div class="t" style="left:145.73px;top:890.00px;font-size:22.5px;color:#cccccc;transform:scaleX(1.0000);">namespace_1.php</div>
</div>
<div class="t" style="left:76.51px;top:22.00px;font-size:22.5px;color:#cccccc;transform:scaleX(0.9963);">File</div><div class="t" style="left:140.15px;top:22.00px;font-size:22.5px;color:#cccccc;transform:scaleX(1.0298);">Edit</div><div class="t" style="left:208.54px;top:22.00px;font-size:22.5px;color:#cccccc;transform:scaleX(1.0311);">Selection</div><div class="t" style="left:332.00px;top:22.00px;font-size:22.5px;color:#cccccc;transform:scaleX(1.0088);">View</div><div class="t" style="left:408.83px;top:22.00px;font-size:22.5px;color:#cccccc;transform:scaleX(1.0394);">Go</div><div class="t" style="left:1016.24px;top:21.00px;font-size:22.5px;color:#cccccc;transform:scaleX(0.9756);">KH</div><div style="position:absolute;left:0;top:0;width:1920px;height:1080px;clip-path:inset(63.0px 0.0px 956.0px 392.0px)"><div class="t" style="left:394.60px;top:86.00px;font-size:22.5px;color:#9d9d9d;transform:scaleX(1.0057);">y_cat.php</div></div><div style="position:absolute;left:0;top:0;width:1920px;height:1080px;clip-path:inset(63.0px 0.0px 956.0px 392.0px)"><div class="t" style="left:387.42px;top:86.00px;font-size:22.5px;color:#9d9d9d;transform:scaleX(1.0800);">r</div></div><div class="t" style="left:602.26px;top:86.00px;font-size:22.5px;color:#9d9d9d;transform:scaleX(1.0497);">text.txt</div><div class="t" style="left:817.34px;top:86.00px;font-size:22.5px;color:#9d9d9d;transform:scaleX(1.0675);">direction.php</div><div class="t" style="left:1063.76px;top:86.00px;font-size:22.5px;color:#9d9d9d;transform:scaleX(1.0610);">formValidation.php</div><div class="t" style="left:1369.30px;top:86.00px;font-size:22.5px;color:#9d9d9d;transform:scaleX(1.0769);">myblog.php</div><div class="t" style="left:1602.96px;top:86.00px;font-size:22.5px;color:#ffffff;transform:scaleX(1.0437);">connect.php</div><div class="t" style="left:421.01px;top:137.00px;font-size:22.5px;color:#a9a9a9;transform:scaleX(0.9412);">PHP va CSDL</div><div class="t" style="left:622.81px;top:137.00px;font-size:22.5px;color:#a9a9a9;transform:scaleX(1.0432);">connect.php</div><div class="t" style="left:121.87px;top:85.00px;font-size:20.5px;color:#cccccc;transform:scaleX(0.8133);">EXPLORER</div><div class="t" style="left:121.88px;top:136.00px;font-size:20.5px;color:#cccccc;font-weight:700;transform:scaleX(0.9905);">KH</div><div class="t" style="left:147.86px;top:177.00px;font-size:22.5px;color:#cccccc;transform:scaleX(1.0587);">file</div><div class="t" style="left:161.14px;top:217.00px;font-size:22.5px;color:#cccccc;transform:scaleX(1.0667);">direction.php</div><div class="t" style="left:160.33px;top:256.00px;font-size:22.5px;color:#cccccc;transform:scaleX(1.0577);">newfile.txt</div><div class="t" style="left:161.46px;top:296.00px;font-size:22.5px;color:#cccccc;transform:scaleX(1.0618);">text.txt</div><div class="t" style="left:146.50px;top:335.00px;font-size:22.5px;color:#cccccc;transform:scaleX(0.9434);">PHP va CSDL</div><div class="t" style="left:160.76px;top:375.00px;font-size:22.5px;color:#cccccc;transform:scaleX(1.0478);">connect.php</div><div class="t" style="left:159.99px;top:415.00px;font-size:22.5px;color:#cccccc;transform:scaleX(1.0830);">myblog.php</div><div class="t" style="left:146.89px;top:454.00px;font-size:22.5px;color:#cccccc;transform:scaleX(0.9204);">XU_LY_FORM</div><div class="t" style="left:160.76px;top:494.00px;font-size:22.5px;color:#cccccc;transform:scaleX(1.0486);">cookie.php</div><div class="t" style="left:161.46px;top:533.00px;font-size:22.5px;color:#cccccc;transform:scaleX(1.0867);">form.html</div><div class="t" style="left:161.46px;top:573.00px;font-size:22.5px;color:#cccccc;transform:scaleX(1.0779);">formget.php</div><div class="t" style="left:161.46px;top:613.00px;font-size:22.5px;color:#cccccc;transform:scaleX(1.0643);">formValidation.php</div><div class="t" style="left:161.03px;top:652.00px;font-size:22.5px;color:#cccccc;transform:scaleX(0.9864);">session_1.php</div><div class="t" style="left:161.03px;top:692.00px;font-size:22.5px;color:#cccccc;transform:scaleX(0.9864);">session_2.php</div><div class="t" style="left:146.35px;top:731.00px;font-size:22.5px;color:#cccccc;transform:scaleX(1.0560);">array.php</div><div class="t" style="left:147.07px;top:771.00px;font-size:22.5px;color:#cccccc;transform:scaleX(1.0368);">foreach.php</div><div class="t" style="left:145.63px;top:811.00px;font-size:22.5px;color:#cccccc;transform:scaleX(1.0582);">ham.php</div><div class="t" style="left:145.63px;top:850.00px;font-size:22.5px;color:#cccccc;transform:scaleX(1.0592);">include.php</div><div class="t" style="left:122.23px;top:912.00px;font-size:19.5px;color:#cccccc;font-weight:700;transform:scaleX(0.9828);">OUTLINE</div><div class="t" style="left:122.81px;top:950.00px;font-size:19.5px;color:#cccccc;font-weight:700;transform:scaleX(0.9857);">TIMELINE</div><div class="t" style="left:106.53px;top:990.00px;font-size:21.5px;color:#cccccc;transform:scaleX(1.0078);">0</div><div class="t" style="left:155.53px;top:990.00px;font-size:21.5px;color:#cccccc;transform:scaleX(1.0078);">0</div><div class="t" style="left:226.83px;top:990.00px;font-size:21.5px;color:#cccccc;transform:scaleX(1.0078);">0</div><div class="t" style="left:1250.06px;top:990.00px;font-size:21.5px;color:#cccccc;transform:scaleX(0.9558);">Ln 12, Col 3</div><div class="t" style="left:1389.81px;top:990.00px;font-size:21.5px;color:#cccccc;transform:scaleX(0.9207);">Spaces: 4</div><div class="t" style="left:1506.06px;top:990.00px;font-size:21.5px;color:#cccccc;transform:scaleX(0.9560);">UTF-8</div><div class="t" style="left:1592.09px;top:990.00px;font-size:21.5px;color:#cccccc;transform:scaleX(0.8472);">CRLF</div><div class="t" style="left:1667.33px;top:990.00px;font-size:21.5px;color:#cccccc;transform:scaleX(0.9110);">PHP</div><div class="t" style="left:1766.96px;top:990.00px;font-size:21.5px;color:#cccccc;transform:scaleX(0.9719);">Go Live</div><div class="t" style="left:262.57px;top:1042.00px;font-size:19.5px;color:#5c5f63;transform:scaleX(0.8463);">Search</div><div class="t" style="left:52.70px;top:113.00px;font-size:15.5px;color:#ffffff;font-weight:700;transform:scaleX(1.0665);">2</div><div class="t" style="left:1597.60px;top:1043.00px;font-size:16px;color:#1b1b1b;transform:scaleX(0.8280);">VIE</div><div class="t" style="left:1761.26px;top:1032.00px;font-size:15.5px;color:#1b1b1b;transform:scaleX(0.9597);">9:24 PM</div><div class="t" style="left:1747.18px;top:1052.00px;font-size:15.5px;color:#1b1b1b;transform:scaleX(0.9957);">3/28/2024</div>
<div class="c" style="top:174.34px"><span style="color:#569cd6">&lt;?php</span></div><div class="ln" style="top:174.34px;color:#6e7681">1</div><div class="c" style="top:208.52px"><span style="color:#9cdcfe">$db_host</span><span style="color:#cccccc"> = </span><span style="color:#ce9178">"localhost"</span><span style="color:#cccccc">;</span></div><div class="ln" style="top:208.52px;color:#6e7681">2</div><div class="c" style="top:242.70px"><span style="color:#9cdcfe">$db_name</span><span style="color:#cccccc"> = </span><span style="color:#ce9178">"my_blogs"</span><span style="color:#cccccc">;</span></div><div class="ln" style="top:242.70px;color:#6e7681">3</div><div class="c" style="top:276.88px"><span style="color:#9cdcfe">$db_user</span><span style="color:#cccccc"> = </span><span style="color:#ce9178">"sql_adminss"</span><span style="color:#cccccc">;</span></div><div class="ln" style="top:276.88px;color:#6e7681">4</div><div class="c" style="top:311.06px"><span style="color:#9cdcfe">$db_password</span><span style="color:#cccccc"> = </span><span style="color:#ce9178">"/joq8bUoVJv4[RI!"</span><span style="color:#cccccc">;</span></div><div class="ln" style="top:311.06px;color:#6e7681">5</div><div class="c" style="top:345.24px"><span style="color:#9cdcfe">$connect</span><span style="color:#cccccc"> = </span><span style="color:#dcdcaa">mysqli_connect</span><span style="color:#ffd700">(</span><span style="color:#9cdcfe">$db_host</span><span style="color:#cccccc">,</span><span style="color:#9cdcfe">$db_name</span><span style="color:#cccccc">,</span><span style="color:#9cdcfe">$db_user</span><span style="color:#cccccc">,</span><span style="color:#9cdcfe">$db_password</span><span style="color:#ffd700">)</span><span style="color:#cccccc">;</span></div><div class="ln" style="top:345.24px;color:#6e7681">6</div><div class="c" style="top:379.42px"><span style="color:#c586c0">if</span><span style="color:#ffd700">(</span><span style="color:#dcdcaa">mysqli_connect_error</span><span style="color:#da70d6">()</span><span style="color:#ffd700">)</span><span style="color:#ffd700">{</span></div><div class="ln" style="top:379.42px;color:#6e7681">7</div><div class="c" style="top:413.60px"><span style="color:#cccccc">    </span><span style="color:#dcdcaa">echo</span><span style="color:#cccccc"> </span><span style="color:#dcdcaa">mysqli_connect_error</span><span style="color:#da70d6">()</span><span style="color:#cccccc">;</span></div><div class="ln" style="top:413.60px;color:#6e7681">8</div><div class="c" style="top:447.78px"><span style="color:#cccccc">    </span><span style="color:#c586c0">exit</span><span style="color:#cccccc">;</span></div><div class="ln" style="top:447.78px;color:#6e7681">9</div><div class="c" style="top:481.96px"><span style="color:#ffd700">}</span></div><div class="ln" style="top:481.96px;color:#6e7681">10</div><div class="c" style="top:516.14px"><span style="color:#dcdcaa">echo</span><span style="color:#cccccc"> </span><span style="color:#ce9178">"MySqli running - Port: 443/80"</span><span style="color:#cccccc">;</span></div><div class="ln" style="top:516.14px;color:#6e7681">11</div><div class="c" style="top:550.32px"><span style="color:#569cd6">?&gt;</span></div><div class="ln" style="top:550.32px;color:#cccccc">12</div>
</body></html>
